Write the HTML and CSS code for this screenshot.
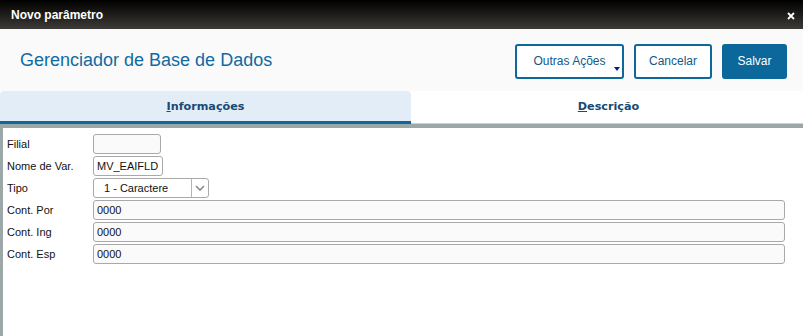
FILE: index.html
```html
<!DOCTYPE html>
<html lang="pt">
<head>
    <meta charset="utf-8">
    <title>Novo parâmetro</title>
    <link rel="stylesheet" href="styles.css">
</head>
<body class="body">
    <div class="titlebar">
        <span class="titlebar-text">Novo parâmetro</span>
        <svg class="close" width="8" height="8" viewBox="0 0 8 8">
            <path d="M1 1 L7 7 M7 1 L1 7" stroke="#fff" stroke-width="1.8"/>
        </svg>
    </div>

    <div class="header">
        <h1 class="header-title">Gerenciador de Base de Dados</h1>
        <div class="actions">
            <button class="btn btn-outline btn-more">Outras Ações<span class="caret"></span></button>
            <button class="btn btn-outline">Cancelar</button>
            <button class="btn btn-primary">Salvar</button>
        </div>
    </div>

    <div class="tabs">
        <div class="tab tab-active"><span><u>I</u>nformações</span></div>
        <div class="tab"><span><u>D</u>escrição</span></div>
    </div>

    <div class="content">
        <div class="row">
            <label class="label">Filial</label>
            <div class="field field-filial"></div>
        </div>
        <div class="row">
            <label class="label">Nome de Var.</label>
            <div class="field field-nome">MV_EAIFLD</div>
        </div>
        <div class="row">
            <label class="label">Tipo</label>
            <div class="field field-select">
                <span class="select-text">1 - Caractere</span>
                <span class="select-arrow">
                    <svg width="12" height="8" viewBox="0 0 12 8">
                        <path d="M2 2 L6 6 L10 2" fill="none" stroke="#8a8a8a" stroke-width="1.6"/>
                    </svg>
                </span>
            </div>
        </div>
        <div class="row">
            <label class="label">Cont. Por</label>
            <div class="field field-wide">0000</div>
        </div>
        <div class="row">
            <label class="label">Cont. Ing</label>
            <div class="field field-wide">0000</div>
        </div>
        <div class="row">
            <label class="label">Cont. Esp</label>
            <div class="field field-wide">0000</div>
        </div>
    </div>
</body>
</html>
```

FILE: styles.css
```css
.body {
    margin: 0;
    font-family: "Liberation Sans", Arial, sans-serif;
    background: #ffffff;
    height: 336px;
    overflow: hidden;
    display: flex;
    flex-direction: column;
}

.titlebar {
    height: 29px;
    background: linear-gradient(#000000, #3d3a37);
    display: flex;
    align-items: center;
    justify-content: space-between;
    padding: 0 8px 0 11px;
    flex-shrink: 0;
}

.titlebar-text {
    color: #ffffff;
    font-weight: bold;
    font-size: 12px;
    margin-top: 1px;
}

.close {
    margin-top: 2px;
}

.header {
    height: 62px;
    background: #fafafa;
    display: flex;
    align-items: center;
    justify-content: space-between;
    padding: 0 16px 0 20px;
    flex-shrink: 0;
}

.header-title {
    margin: 0;
    font-size: 18px;
    font-weight: normal;
    color: #0f6aa3;
}

.actions {
    display: flex;
    gap: 10px;
    margin-top: 2px;
}

.btn {
    height: 35px;
    border: 2px solid #0c679a;
    border-radius: 3px;
    font-family: "Liberation Sans", Arial, sans-serif;
    font-size: 12px;
    padding: 0;
}

.btn-outline {
    background: #ffffff;
    color: #0f5a8c;
}

.btn-more {
    width: 109px;
    position: relative;
}

.btn:nth-child(2) {
    width: 78px;
}

.btn-primary {
    width: 65px;
    background: #0c679a;
    color: #ffffff;
}

.caret {
    position: absolute;
    right: 2px;
    bottom: 6px;
    width: 0;
    height: 0;
    border-left: 3px solid transparent;
    border-right: 3px solid transparent;
    border-top: 4px solid #0a1a8a;
}

.tabs {
    display: flex;
    height: 33px;
    flex-shrink: 0;
}

.tab {
    flex: 1;
    display: flex;
    align-items: center;
    justify-content: center;
    font-family: "DejaVu Sans", Verdana, sans-serif;
    font-weight: bold;
    font-size: 11.2px;
    color: #174a75;
    background: #ffffff;
    border-bottom: 1px solid #cfcfcf;
    padding-bottom: 1px;
}

.tab:first-child {
    flex: 0 0 411px;
}

.tab:last-child span {
    margin-left: 3px;
}

.tab-active {
    background: #e2edf8;
    border-bottom: 3px solid #0c679a;
    border-radius: 4px 4px 0 0;
    padding-bottom: 0;
}

.content {
    flex: 1;
    border-top: 4px solid #9ca7a8;
    border-left: 3px solid #9ca7a8;
    padding: 6px 18px 0 4px;
    display: flex;
    flex-direction: column;
    gap: 2px;
}

.row {
    display: flex;
    align-items: center;
    height: 20px;
}

.label {
    width: 86px;
    font-size: 11px;
    color: #111111;
}

.field {
    box-sizing: border-box;
    height: 20px;
    border: 1px solid #a9a9a9;
    border-radius: 3px;
    background: #fafafa;
    font-size: 11px;
    color: #111111;
    display: flex;
    align-items: center;
    padding-left: 3px;
}

.field-filial {
    width: 68px;
}

.field-nome {
    width: 70px;
    background: #ffffff;
}

.field-select {
    width: 116px;
    padding-left: 0;
    background: #ffffff;
}

.select-text {
    flex: 1;
    padding-left: 10px;
}

.select-arrow {
    width: 16px;
    height: 100%;
    border-left: 1px solid #b5b5b5;
    display: flex;
    align-items: center;
    justify-content: center;
}

.field-wide {
    flex: 1;
}
```
